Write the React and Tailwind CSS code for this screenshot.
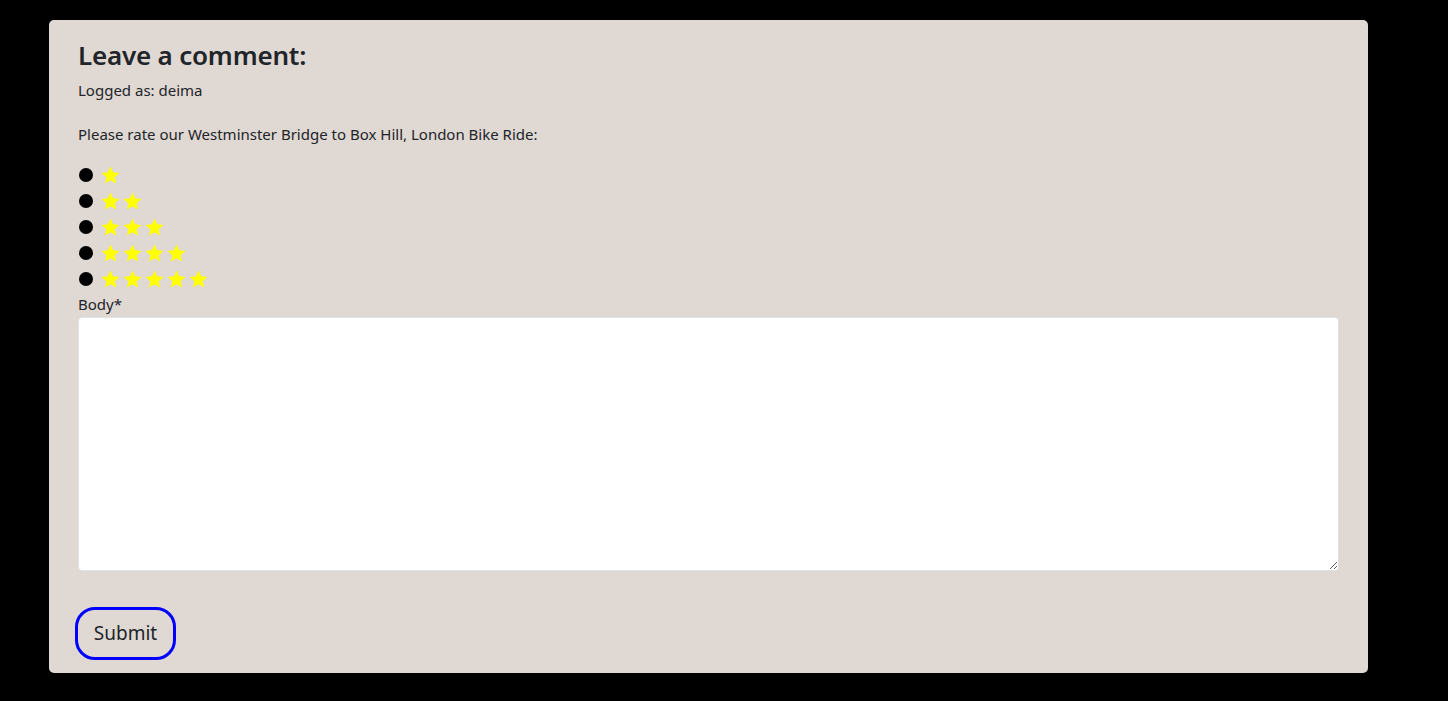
import React from "react";

function Star() {
  return (
    <svg width="19" height="19" viewBox="0 0 24 24" className="block">
      <polygon
        points="12,0.5 15.23,8.05 23.41,8.79 17.23,14.2 19.05,22.21 12,18 4.95,22.21 6.77,14.2 0.59,8.79 8.77,8.05"
        fill="#ffff00"
      />
    </svg>
  );
}

export default function App() {
  const rows = [1, 2, 3, 4, 5];
  return (
    <div className="min-h-[701px] w-full bg-black pt-[20px]" style={{ fontFamily: '"Noto Sans", "Open Sans", sans-serif' }}>
      <div className="ml-[49px] w-[1319px] h-[653px] rounded-[5px] bg-[#e0d8d3] px-[29px] pt-[22px] text-[#212529]">
        <h3 className="text-[26px] leading-[1] font-semibold tracking-[-0.2px]">Leave a comment:</h3>
        <p className="mt-[11px] text-[15px] leading-[22px]">Logged as: deima</p>
        <p className="mt-[22px] text-[15px] leading-[22px]">Please rate our Westminster Bridge to Box Hill, London Bike Ride:</p>
        <div className="mt-[17px] flex flex-col">
          {rows.map((n) => (
            <div key={n} className="flex h-[26px] items-center">
              <span className="ml-[1px] block h-[14px] w-[14px] rounded-full bg-black" />
              <span className="ml-[8px] flex gap-[3px]">
                {Array.from({ length: n }).map((_, i) => (
                  <Star key={i} />
                ))}
              </span>
            </div>
          ))}
        </div>
        <label className="block text-[15px] leading-[22px] mt-[1px]">Body*</label>
        <textarea className="mt-[2px] block h-[254px] w-full resize-y rounded-[4px] border border-[#dee2e6] bg-white" />
        <button className="mt-[36px] ml-[-3px] h-[53px] w-[101px] rounded-[20px] border-[3px] border-[#0000ff] text-[19px] text-[#212529]">
          Submit
        </button>
      </div>
    </div>
  );
}
